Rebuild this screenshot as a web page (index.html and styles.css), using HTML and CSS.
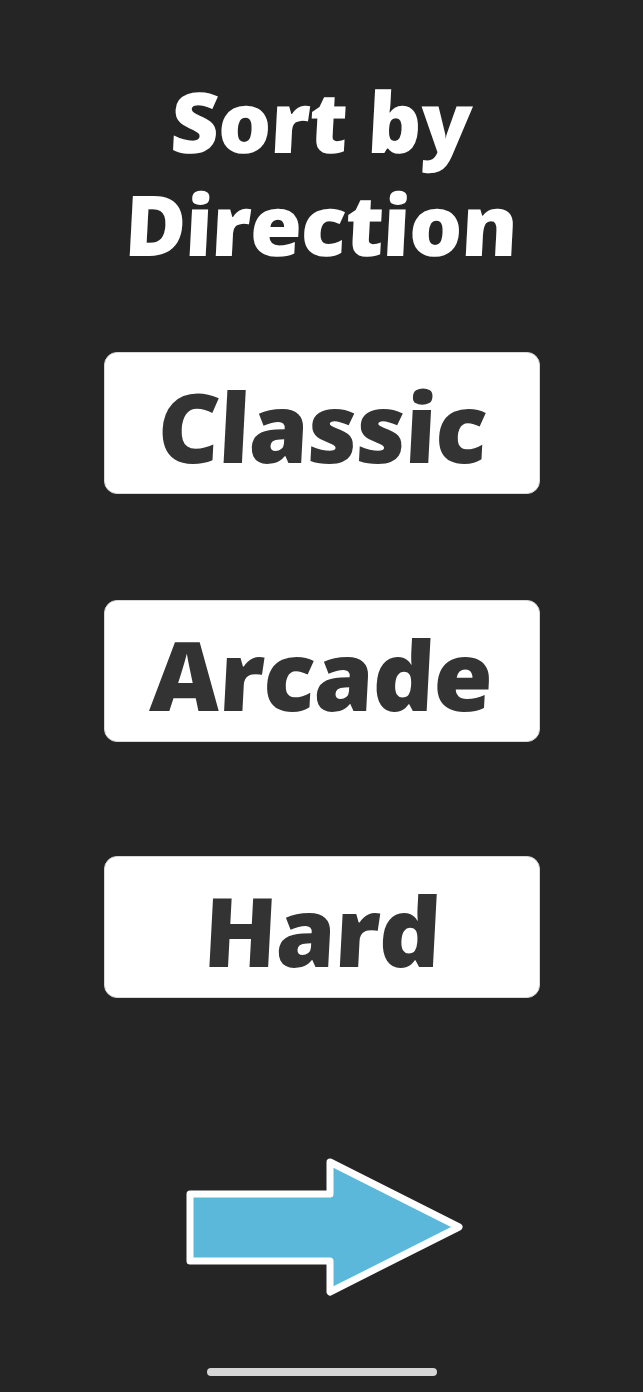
FILE: index.html
```html
<!DOCTYPE html>
<html lang="en">
<head>
<meta charset="utf-8">
<title>Sort by Direction</title>
<link rel="stylesheet" href="styles.css">
</head>
<body>
<main class="screen">
  <h1 class="title"><span class="slant">Sort by</span><br><span class="slant">Direction</span></h1>
  <div class="modes">
    <button class="mode mode-classic"><span class="slant">Classic</span></button>
    <button class="mode mode-arcade"><span class="slant">Arcade</span></button>
    <button class="mode mode-hard"><span class="slant">Hard</span></button>
  </div>
  <svg class="next-arrow" width="290" height="155" viewBox="0 0 290 155" aria-label="Next">
    <path d="M10 45 H150 V13 L279 78 L150 143 V112 H10 Z" fill="#5bb8da" stroke="#ffffff" stroke-width="7" stroke-linejoin="round"/>
  </svg>
  <div class="home-indicator"></div>
</main>
</body>
</html>
```
FILE: styles.css
```css
html, body {
  margin: 0;
  padding: 0;
  background: #252525;
}

.screen {
  height: 1392px;
  display: flex;
  flex-direction: column;
  align-items: center;
  font-family: "Open Sans", "DejaVu Sans", sans-serif;
  font-weight: 800;
}

.slant {
  display: inline-block;
  transform: skewX(-3deg);
}

.title {
  margin: 69px 0 0 0;
  color: #ffffff;
  font-size: 84px;
  font-weight: 800;
  line-height: 103px;
  letter-spacing: -1px;
  text-align: center;
}

.modes {
  display: flex;
  flex-direction: column;
  margin-top: 77px;
  margin-left: 1px;
}

.mode {
  box-sizing: border-box;
  width: 436px;
  height: 142px;
  padding: 6px 0 0 0;
  border: 1px solid #d8d8d8;
  border-radius: 13px;
  background: #ffffff;
  color: #333333;
  font-family: inherit;
  font-weight: 800;
  font-size: 96px;
  line-height: 134px;
  letter-spacing: -1px;
  text-align: center;
}

.mode-arcade {
  margin-top: 106px;
}

.mode-hard {
  margin-top: 114px;
}

.next-arrow {
  display: block;
  margin-top: 151px;
  margin-left: 7px;
}

.home-indicator {
  width: 230px;
  height: 8px;
  margin-top: 64px;
  margin-left: 1px;
  border-radius: 4px;
  background: #d6d6d6;
}
```
